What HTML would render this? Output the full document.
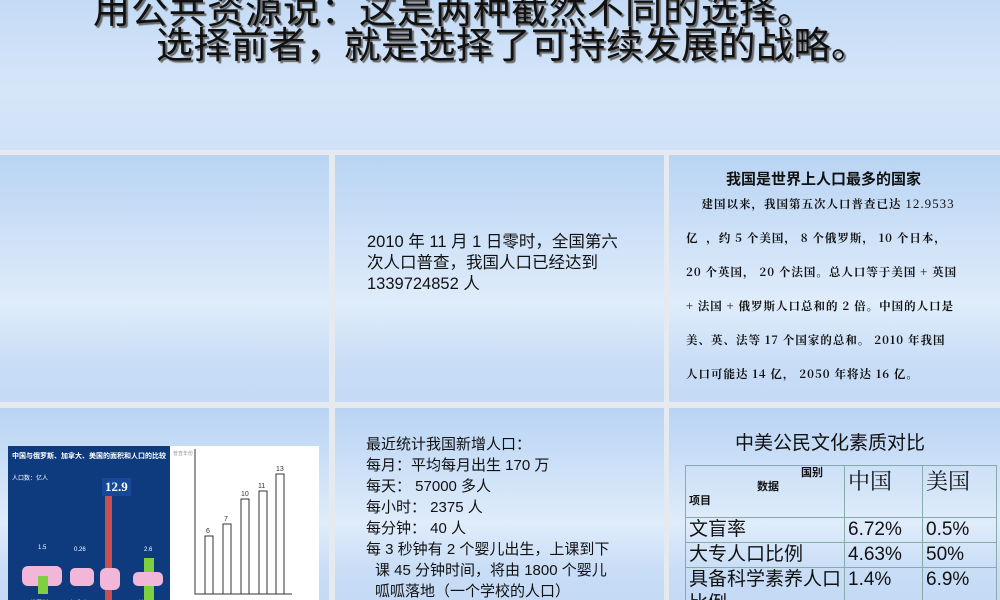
<!DOCTYPE html>
<html><head><meta charset="utf-8"><style>
*{margin:0;padding:0;box-sizing:border-box}
body{width:1000px;height:600px;overflow:hidden;background:#e6eaee;position:relative;font-family:"Liberation Sans","Noto Sans CJK SC",sans-serif;color:#111}
.p{position:absolute;background:linear-gradient(#b9d4f4 0%,#cfe2f8 35%,#dfecfb 60%,#c8ddf6 85%,#c4daf5 100%);overflow:hidden}
.abs{position:absolute}
.top{left:0;top:0;width:1000px;height:150px;background:linear-gradient(#c4dbf6,#d6e6f9 60%,#cfe2f7)}
.big{font-family:"WenQuanYi Zen Hei","Noto Sans CJK SC",sans-serif;font-size:37px;line-height:40px;text-shadow:2px 2px 1px #666;white-space:nowrap}
.serif{font-family:"Noto Serif CJK SC","Liberation Serif",serif;font-size:11.5px;letter-spacing:1px;font-weight:bold;line-height:34px;white-space:nowrap}
table{border-collapse:collapse;position:absolute;left:16px;top:57px;width:312px}
td{border:1px solid #8aa;font-size:19px;padding:0 3px;vertical-align:top;line-height:24px}
</style></head><body>
<div class="p top">
 <div class="abs big" style="left:93px;top:-13px;letter-spacing:1px">用公共资源说：这是两种截然不同的选择。</div>
 <div class="abs big" style="left:156px;top:22px;letter-spacing:0.5px">选择前者，就是选择了可持续发展的战略。</div>
</div>
<div class="p" style="left:0;top:155px;width:329px;height:247px"></div>
<div class="p" style="left:335px;top:155px;width:329px;height:247px">
 <div class="abs" style="left:32px;top:77px;font-size:16.5px;line-height:21px;width:262px">2010 年 11 月 1 日零时，全国第六次人口普查，我国人口已经达到1339724852 人</div>
</div>
<div class="p" style="left:669px;top:155px;width:331px;height:247px">
 <div class="abs" style="left:57px;top:13px;font-size:15px;font-weight:bold">我国是世界上人口最多的国家</div>
 <div class="abs serif" style="left:17px;top:32px">
 &nbsp;&nbsp;&nbsp;&nbsp;建国以来，我国第五次人口普查已达 <span style="font-weight:normal;font-family:'Liberation Serif',serif;font-size:13px">12.9533</span><br>
 亿 &nbsp;，约 5 个美国， 8 个俄罗斯， 10 个日本，<br>
 20 个英国， 20 个法国。总人口等于美国 + 英国<br>
 + 法国 + 俄罗斯人口总和的 2 倍。中国的人口是<br>
 美、英、法等 17 个国家的总和。 2010 年我国<br>
 人口可能达 14 亿， 2050 年将达 16 亿。</div>
</div>
<div class="p" style="left:0;top:408px;width:329px;height:192px">
 <div class="abs" style="left:8px;top:38px;width:162px;height:160px;background:#0e3a7e">
  <div class="abs" style="left:4px;top:5px;color:#fff;font-size:7px;font-weight:bold;white-space:nowrap">中国与俄罗斯、加拿大、美国的面积和人口的比较</div>
  <div class="abs" style="left:4px;top:27px;color:#fff;font-size:6px">人口数：亿人</div>
  <div class="abs" style="left:94px;top:32px;color:#fff;background:#16489a;font:bold 13px 'Liberation Serif',serif;padding:1px 3px">12.9</div>
  <div class="abs" style="left:97px;top:50px;width:7px;height:104px;background:#c85050"></div>
  <div class="abs" style="left:30px;top:99px;color:#fff;font-size:6px">1.5</div>
  <div class="abs" style="left:66px;top:101px;color:#fff;font-size:6px">0.26</div>
  <div class="abs" style="left:136px;top:101px;color:#fff;font-size:6px">2.6</div>
  <div class="abs" style="left:14px;top:120px;width:40px;height:20px;background:#f2b6d8;border-radius:6px"></div>
  <div class="abs" style="left:30px;top:130px;width:10px;height:18px;background:#7ed040"></div>
  <div class="abs" style="left:62px;top:122px;width:24px;height:18px;background:#f2b6d8;border-radius:5px"></div>
  <div class="abs" style="left:92px;top:122px;width:20px;height:22px;background:#f2b6d8;border-radius:6px"></div>
  <div class="abs" style="left:136px;top:112px;width:10px;height:42px;background:#7ed040"></div>
  <div class="abs" style="left:125px;top:126px;width:30px;height:14px;background:#f2b6d8;border-radius:5px"></div>
  <div class="abs" style="left:22px;top:152px;color:#fff;font-size:6px">俄罗斯</div>
  <div class="abs" style="left:62px;top:152px;color:#fff;font-size:6px">加拿大</div>
  <div class="abs" style="left:130px;top:152px;color:#fff;font-size:6px">美国</div>
 </div>
 <div class="abs" style="left:170px;top:38px;width:149px;height:160px;background:#fff">
  <svg width="149" height="160" style="position:absolute;left:0;top:0" font-family="Liberation Sans" font-size="7" fill="#333">
   <text x="3" y="9" font-size="5" fill="#999">普查年份</text>
   <path d="M25 3V148H122" stroke="#333" fill="none"/>
   <rect x="35" y="90" width="8" height="58" fill="none" stroke="#333"/>
   <rect x="53" y="78" width="8" height="70" fill="none" stroke="#333"/>
   <rect x="71" y="53" width="8" height="95" fill="none" stroke="#333"/>
   <rect x="89" y="45" width="8" height="103" fill="none" stroke="#333"/>
   <rect x="106" y="28" width="8" height="120" fill="none" stroke="#333"/>
   <text x="36" y="87">6</text><text x="54" y="75">7</text><text x="71" y="50">10</text><text x="88" y="42">11</text><text x="106" y="25">13</text>
   <text x="30" y="158" font-size="6">1953</text><text x="48" y="158" font-size="6">1964</text><text x="66" y="160" font-size="6">1982</text><text x="84" y="160" font-size="6">1990</text><text x="103" y="158" font-size="6">2000</text>
  </svg>
 </div>
</div>
<div class="p" style="left:335px;top:408px;width:329px;height:192px">
 <div class="abs" style="left:31px;top:26px;font-size:15px;line-height:21px;width:255px">
  最近统计我国新增人口：<br>每月：平均每月出生 170 万<br>每天： 57000 多人<br>每小时： 2375 人<br>每分钟： 40 人<br>
  <div style="text-indent:-9px;padding-left:9px">每 3 秒钟有 2 个婴儿出生，上课到下课 45 分钟时间，将由 1800 个婴儿呱呱落地（一个学校的人口）</div>
 </div>
</div>
<div class="p" style="left:669px;top:408px;width:331px;height:192px">
 <div class="abs" style="left:66px;top:20px;font-size:19px">中美公民文化素质对比</div>
 <table>
  <tr style="height:52px"><td style="width:159px;font-size:11px;font-weight:bold;line-height:14px"><div style="text-align:right;padding-right:18px">国别</div><div style="padding-left:68px">数据</div><div>项目</div></td><td style="width:78px;font-size:22px;font-family:'Noto Serif CJK SC',serif;line-height:30px">中国</td><td style="font-size:22px;font-family:'Noto Serif CJK SC',serif;line-height:30px">美国</td></tr>
  <tr><td>文盲率</td><td>6.72%</td><td>0.5%</td></tr>
  <tr><td>大专人口比例</td><td>4.63%</td><td>50%</td></tr>
  <tr><td>具备科学素养人口比例</td><td>1.4%</td><td>6.9%</td></tr>
 </table>
</div>
</body></html>
